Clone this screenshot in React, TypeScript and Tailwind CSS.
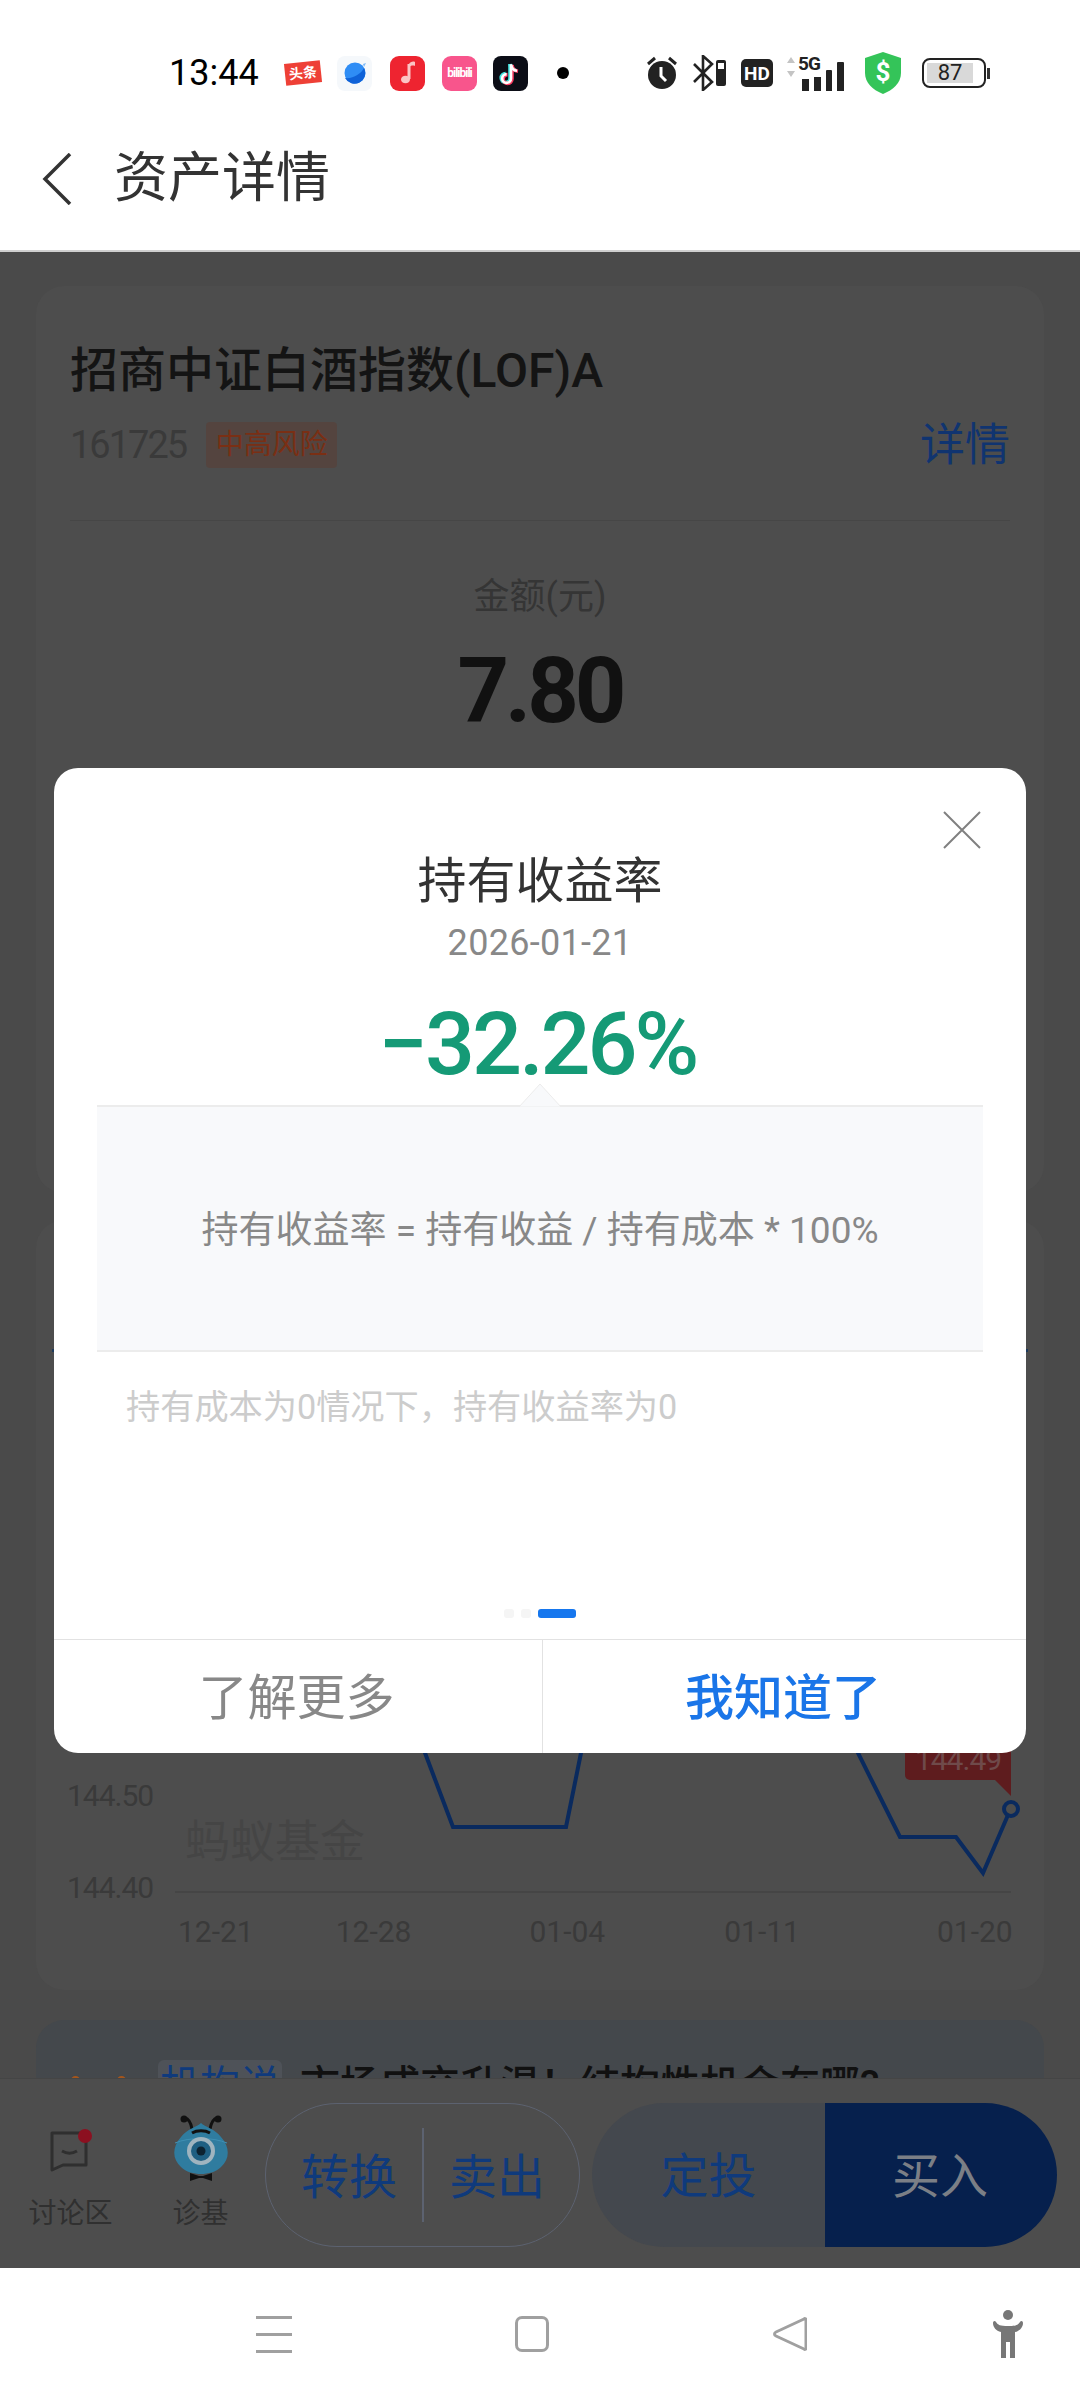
import React from 'react';

const AXIS_DATES = [
  { label: '12-21', cls: 'ml-0' },
  { label: '12-28', cls: 'ml-[82px]' },
  { label: '01-04', cls: 'ml-[118px]' },
  { label: '01-11', cls: 'ml-[119px]' },
  { label: '01-20', cls: 'ml-[137px]' },
];

function Toutiao() {
  return (
    <div className="w-[36px] h-[22px] bg-[#ee4036] -rotate-6 flex items-center justify-center text-white text-[14px] font-bold leading-none">
      头条
    </div>
  );
}

function Planet() {
  return (
    <div className="w-[35px] h-[35px] rounded-[8px] bg-[#f5f8fb] flex items-center justify-center">
      <svg width="28" height="28" viewBox="0 0 28 28">
        <circle cx="14" cy="14" r="10.5" fill="#2f8df5" />
        <path d="M4 19a10.5 10.5 0 0 0 19-10c-3 6-11 11-19 10z" fill="#0f62d8" />
        <path d="M22 5l3-1-2 4z" fill="#7bb9f8" />
      </svg>
    </div>
  );
}

function MusicTile() {
  return (
    <div className="w-[35px] h-[35px] rounded-[9px] bg-[#ee2430] flex items-center justify-center">
      <svg width="22" height="26" viewBox="0 0 22 26">
        <path d="M12 4v15" stroke="#fbc4c4" strokeWidth="3" fill="none" />
        <path d="M12 4c1-2 4-3 6-2v4c-2-1-5 0-6 1z" fill="#fbc4c4" />
        <ellipse cx="8.5" cy="19.5" rx="4.5" ry="3.8" fill="#fbc4c4" />
      </svg>
    </div>
  );
}

function BiliTile() {
  return (
    <div className="w-[35px] h-[35px] rounded-[9px] bg-[#f8558c] flex items-center justify-center text-white text-[12px] font-bold leading-none tracking-[-1px]">
      bilibili
    </div>
  );
}

function TikTokTile() {
  return (
    <div className="w-[35px] h-[35px] rounded-[8px] bg-[#0b0d16] flex items-center justify-center">
      <svg width="24" height="26" viewBox="0 0 24 26" fill="none" strokeWidth="3.6">
        <path d="M11 4v14a4.4 4.4 0 1 1-4.400-4.400" stroke="#3fe3e0" />
        <path d="M11 4c.5 3.500 3 6 6 6.300" stroke="#3fe3e0" />
        <path d="M13 5v14a4.400 4.400 0 1 1-4.400-4.400" stroke="#fa3c63" />
        <path d="M13 5c.5 3.500 3 6 6 6.300" stroke="#fa3c63" />
        <path d="M12 4.500v14a4.400 4.400 0 1 1-4.400-4.400" stroke="#fff" strokeWidth="2.600" />
        <path d="M12 4.500c.5 3.500 3 6 6 6.300" stroke="#fff" strokeWidth="2.600" />
      </svg>
    </div>
  );
}

function StatusRight() {
  return (
    <div className="flex items-center pr-[94px] h-[44px]">
      <svg width="32" height="34" viewBox="0 0 32 34">
        <circle cx="16" cy="19" r="14" fill="#222" />
        <path d="M15 11v9l5 5" stroke="#fff" strokeWidth="3" fill="none" />
        <path d="M2 8l7-6M30 8l-7-6" stroke="#222" strokeWidth="3" />
      </svg>
      <svg className="ml-[14px]" width="35" height="36" viewBox="0 0 35 36">
        <path d="M2 9l18 18-9 8V1l9 8L2 27" stroke="#222" strokeWidth="2.600" fill="none" />
        <rect x="24" y="5" width="10" height="26" rx="2" fill="#222" />
        <rect x="26" y="8" width="6" height="6" fill="#fff" />
      </svg>
      <div className="ml-[14px] w-[32px] h-[28px] rounded-[5px] bg-[#222] text-white text-[19px] font-bold leading-none flex items-center justify-center">
        HD
      </div>
      <div className="ml-[13px] relative w-[59px] h-[36px]">
        <svg className="absolute left-0 top-0" width="10" height="24" viewBox="0 0 10 24">
          <path d="M5 2l4 6H1zM5 22l4-6H1z" fill="#c4c4c4" />
        </svg>
        <span className="absolute left-[12px] top-[-1px] text-[19px] font-bold leading-none tracking-[-1px] text-[#222]">5G</span>
        <div className="absolute left-[16px] bottom-0 flex items-end gap-[5px]">
          <div className="w-[7px] h-[12px] bg-[#222]" />
          <div className="w-[7px] h-[14px] bg-[#222]" />
          <div className="w-[6px] h-[21px] bg-[#222] rounded-t-[1px]" />
          <div className="w-[7px] h-[29px] bg-[#222] rounded-t-[1px]" />
        </div>
      </div>
      <svg className="ml-[18px]" width="40" height="44" viewBox="0 0 40 44">
        <path d="M20 1l18 6v15c0 10-8 17-18 21C10 39 2 32 2 22V7z" fill="#34c459" />
        <text x="20" y="30" textAnchor="middle" fontSize="26" fontWeight="700" fill="#fff">$</text>
      </svg>
      <div className="ml-[19px] relative w-[64px] h-[30px] rounded-[8px] border-2 border-[#222] flex items-center pl-[3px]">
        <div className="w-[46px] h-[20px] bg-[#d9d9d9] text-[#222] text-[22px] leading-none flex items-center justify-center">87</div>
      </div>
      <div className="w-[3px] h-[11px] bg-[#333] ml-[1px] -mr-[4px]" />
    </div>
  );
}

function ChatIcon() {
  return (
    <svg width="46" height="44" viewBox="0 0 46 44" fill="none">
      <path d="M4 4h34v32H15L4 41z" stroke="#2f2f2f" strokeWidth="3" strokeLinejoin="round" />
      <path d="M14 22c5 3 10 3 15 0" stroke="#2f2f2f" strokeWidth="3" />
      <circle cx="37" cy="7" r="7" fill="#8c1020" />
    </svg>
  );
}

function MascotIcon() {
  return (
    <svg width="58" height="68" viewBox="0 0 58 68">
      <path d="M20 14c-1-6-3-10-7-11M38 14c1-6 3-10 7-11" stroke="#111" strokeWidth="3" fill="none" />
      <circle cx="12" cy="4" r="3.500" fill="#111" />
      <circle cx="46" cy="4" r="3.500" fill="#111" />
      <path d="M29 8c4 4 14 6 20 14 9 10 9 22 0 30-5 5-13 7-20 7s-15-2-20-7c-9-8-9-20 0-30 6-8 16-10 20-14z" fill="#2f7c9f" />
      <path d="M3 28c14-6 38-6 52 0" fill="none" stroke="#3f90b4" strokeWidth="1" />
      <circle cx="29" cy="36" r="14" fill="#9fb4bf" />
      <circle cx="29" cy="36" r="10" fill="#1f5f82" />
      <circle cx="29" cy="36" r="4.500" fill="#0d2230" />
      <path d="M20 18c5-3 13-3 18 0" stroke="#111" strokeWidth="3" fill="none" />
      <path d="M18 58l9 3 4 0 9-3v8l-9-3h-4l-9 3z" fill="#111" />
    </svg>
  );
}

function ChartPlot() {
  return (
    <div className="relative w-[846px] h-[200px]">
      <svg className="absolute inset-0" width="846" height="200" viewBox="0 0 846 200" fill="none">
        <path d="M0 192H836" stroke="#454545" strokeWidth="2" />
        <path d="M230 0L278 127H391L406 53L410 0" stroke="#0a2a5e" strokeWidth="4" />
        <path d="M660 0L683 53L699 85L725 137H781L808 173L833 115" stroke="#0a2a5e" strokeWidth="4" />
        <circle cx="836" cy="109" r="7" stroke="#0a2a5e" strokeWidth="4" />
      </svg>
      <div className="absolute left-[730px] top-[40px] w-[106px] h-[40px] rounded-bl-[5px] bg-[#5e1c1e] text-[#6f4a4a] text-[30px] leading-none tracking-[-1px] flex items-center justify-center">
        144.49
      </div>
      <div className="absolute left-[820px] top-[80px] w-0 h-0 border-l-[16px] border-l-transparent border-t-[16px] border-t-[#5e1c1e]" />
      <div className="absolute left-[10px] top-[120px] text-[45px] leading-none text-[#454545]">蚂蚁基金</div>
    </div>
  );
}

function PageBehind() {
  return (
    <div className="h-full bg-[#4a4a4a] px-[36px] pt-[34px] flex flex-col gap-[30px]">
      <div className="h-[907px] shrink-0 bg-[#4d4d4d] rounded-[28px] px-[34px] pt-[61px] mb-[-3px]">
        <div className="text-[48px] leading-none font-medium text-[#141414]">招商中证白酒指数(LOF)A</div>
        <div className="mt-[27px] flex items-center h-[46px]">
          <span className="text-[38px] leading-none tracking-[-2px] text-[#3a3a3a]">161725</span>
          <span className="ml-[20px] h-[46px] w-[131px] rounded-[4px] bg-[#54443f] text-[#7a2f14] text-[28px] leading-none flex items-center justify-center">中高风险</span>
          <span className="ml-auto text-[45px] leading-none text-[#103470]">详情</span>
        </div>
        <div className="mt-[52px] h-px bg-[#464646]" />
        <div className="mt-[58px] text-center text-[36px] leading-none text-[#353535]">金额(元)</div>
        <div className="mt-[32px] text-center text-[90px] leading-none font-bold tracking-[-4px] text-[#111]">7.80</div>
      </div>
      <div className="h-[770px] shrink-0 bg-[#4d4d4d] rounded-[28px] pt-[129px]">
        <div className="mx-[16px] h-[3px] bg-[#1d3a5c]" />
        <div className="mt-[348px] flex">
          <div className="w-[139px] pl-[31px] h-[200px] relative text-[30px] leading-none tracking-[-1px] text-[#3a3a3a]">
            <div className="absolute top-[81px]">144.50</div>
            <div className="absolute top-[173px]">144.40</div>
          </div>
          <ChartPlot />
        </div>
        <div className="mt-[17px] pl-[142px] flex text-[30px] leading-none text-[#3a3a3a]">
          {AXIS_DATES.map((d) => (
            <span key={d.label} className={d.cls}>{d.label}</span>
          ))}
        </div>
      </div>
      <div className="h-[120px] shrink-0 bg-[#44484c] rounded-t-[28px] pt-[40px] pl-[122px] relative">
        <div className="absolute left-[35px] top-[56px] flex gap-[37px]">
          <div className="w-[9px] h-[9px] rounded-full bg-[#a5561c]" />
          <div className="w-[9px] h-[9px] rounded-full bg-[#a5561c]" />
        </div>
        <div className="flex items-start">
          <span className="w-[124px] h-[60px] rounded-[6px] bg-[#4e5258] text-[#0f3a7c] text-[40px] leading-none pt-[6px] text-center">机构说</span>
          <span className="ml-[18px] pt-[6px] text-[40px] leading-none font-medium text-[#111]">市场成交升温！结构性机会在哪?</span>
        </div>
      </div>
    </div>
  );
}

function ResultModal() {
  return (
    <div className="w-[972px] h-[985px] bg-white rounded-[24px] relative flex flex-col overflow-hidden">
      <svg className="absolute left-[889px] top-[43px]" width="38" height="38" viewBox="0 0 38 38">
        <path d="M1 1l36 36M37 1L1 37" stroke="#808080" strokeWidth="2" />
      </svg>
      <div className="mt-[89px] text-center text-[49px] leading-none text-[#333]">持有收益率</div>
      <div className="mt-[19px] text-center text-[36px] leading-none tracking-[0.3px] text-[#888]">2026-01-21</div>
      <div className="mt-[39px] pr-[5px] text-center text-[88px] leading-none font-medium tracking-[-3px] text-[#159a76]">−32.26%</div>
      <div className="mt-[17px] mx-[43px] h-[247px] pt-[3px] bg-[#f8f9fb] border-y-2 border-[#ececec] relative flex items-center justify-center text-[37px] leading-none text-[#888]">
        <svg className="absolute left-[422px] top-[-24px]" width="42" height="24" viewBox="0 0 42 24">
          <path d="M0 24L21 1l21 23z" fill="#f8f9fb" stroke="#ececec" strokeWidth="1" />
        </svg>
        持有收益率 = 持有收益 / 持有成本 * 100%
      </div>
      <div className="mt-[38px] pl-[72px] text-[34.2px] leading-none text-[#ccc]">持有成本为0情况下，持有收益率为0</div>
      <div className="mt-auto mb-[21px] flex justify-center gap-[7px]">
        <div className="w-[10px] h-[9px] rounded-[3px] bg-[#f5f5f5]" />
        <div className="w-[10px] h-[9px] rounded-[3px] bg-[#f5f5f5]" />
        <div className="w-[38px] h-[9px] rounded-[3px] bg-[#1677ee]" />
      </div>
      <div className="h-[114px] border-t border-[#e2e2e2] flex text-[49px] leading-none">
        <div className="w-[489px] border-r border-[#e2e2e2] flex items-center justify-center text-[#888] pr-[3px] pt-[3px]">了解更多</div>
        <div className="flex-1 flex items-center justify-center font-medium text-[#1a75e8] pr-[3px] pt-[3px]">我知道了</div>
      </div>
    </div>
  );
}

export default function App() {
  return (
    <div className="w-[1080px] h-[2400px] flex flex-col bg-white font-[Roboto,'Noto_Sans_CJK_SC',sans-serif]">
      <div className="h-[252px] shrink-0 border-b-2 border-[#cfcfcf]">
        <div className="h-[125px] pt-[21px] flex items-center justify-between">
          <div className="flex items-center pl-[169px]">
            <span className="w-[93px] text-[36px] leading-none text-black">13:44</span>
            <div className="ml-[23px]"><Toutiao /></div>
            <div className="ml-[16px]"><Planet /></div>
            <div className="ml-[18px]"><MusicTile /></div>
            <div className="ml-[17px]"><BiliTile /></div>
            <div className="ml-[16px]"><TikTokTile /></div>
            <div className="ml-[29px] w-[12px] h-[12px] rounded-full bg-black" />
          </div>
          <StatusRight />
        </div>
        <div className="h-[106px] pt-[2px] flex items-center pl-[42px]">
          <svg width="30" height="52" viewBox="0 0 30 52">
            <path d="M28 1L3 26l25 25" stroke="#333" strokeWidth="3.500" fill="none" />
          </svg>
          <span className="ml-[42px] text-[54px] leading-none text-[#333]">资产详情</span>
        </div>
      </div>

      <div className="flex-1 min-h-0 relative flex flex-col">
        <div className="flex-1 min-h-0 overflow-hidden">
          <PageBehind />
        </div>

        <div className="h-[190px] shrink-0 bg-[#4d4d4d] border-t border-[#454545] flex items-start">
          <div className="ml-[28px] w-[85px] flex flex-col items-center pt-[50px]">
            <ChatIcon />
            <span className="mt-[27px] text-[28px] leading-none text-[#303030] whitespace-nowrap">讨论区</span>
          </div>
          <div className="ml-[59px] w-[57px] flex flex-col items-center pt-[36px]">
            <MascotIcon />
            <span className="mt-[17px] text-[28px] leading-none text-[#303030] whitespace-nowrap">诊基</span>
          </div>
          <div className="ml-[36px] mt-[24px] w-[315px] h-[144px] rounded-full border border-[#5c6270] flex items-center text-[48px] leading-none text-[#0f3a7c]">
            <span className="ml-[35px] pt-[5px]">转换</span>
            <div className="mx-[25px] w-[2px] h-[94px] bg-[#5c6270]" />
            <span className="pt-[5px]">卖出</span>
          </div>
          <div className="ml-[12px] mt-[24px] w-[465px] h-[144px] rounded-full overflow-hidden flex text-[48px] leading-none">
            <div className="w-[233px] pt-[4px] bg-[#44484e] text-[#0f3a7c] flex items-center justify-center">定投</div>
            <div className="flex-1 pt-[4px] bg-[#06204d] text-[#7b7f86] flex items-center justify-center pr-[2px]">买入</div>
          </div>
        </div>

        <div className="absolute inset-0 pt-[1px] flex items-center justify-center">
          <ResultModal />
        </div>
      </div>

      <div className="h-[132px] shrink-0 bg-white flex items-center pl-[256px]">
        <div className="w-[36px] h-[37px] flex flex-col justify-between">
          <div className="h-[3px] bg-[#a0a0a0]" />
          <div className="h-[3px] bg-[#a0a0a0]" />
          <div className="h-[3px] bg-[#a0a0a0]" />
        </div>
        <div className="ml-[223px] w-[34px] h-[36px] rounded-[7px] border-[3px] border-[#a0a0a0]" />
        <svg className="ml-[224px]" width="34" height="36" viewBox="0 0 34 36">
          <path d="M31 3c1-1 2 0 2 1v28c0 1-1 2-2 1L3 20c-2-1-2-3 0-4z" stroke="#a0a0a0" strokeWidth="3" fill="none" strokeLinejoin="round" />
        </svg>
        <svg className="ml-[183px]" width="36" height="48" viewBox="0 0 36 48">
          <circle cx="18" cy="5" r="5" fill="#777" />
          <path d="M3 13c0-2 2-3 3-1 2 3 4 4 12 4s10-1 12-4c1-2 3-1 3 1 0 4-3 8-8 9v26h-5V32h-4v16h-5V22C6 21 3 17 3 13z" fill="#777" />
        </svg>
      </div>
    </div>
  );
}
